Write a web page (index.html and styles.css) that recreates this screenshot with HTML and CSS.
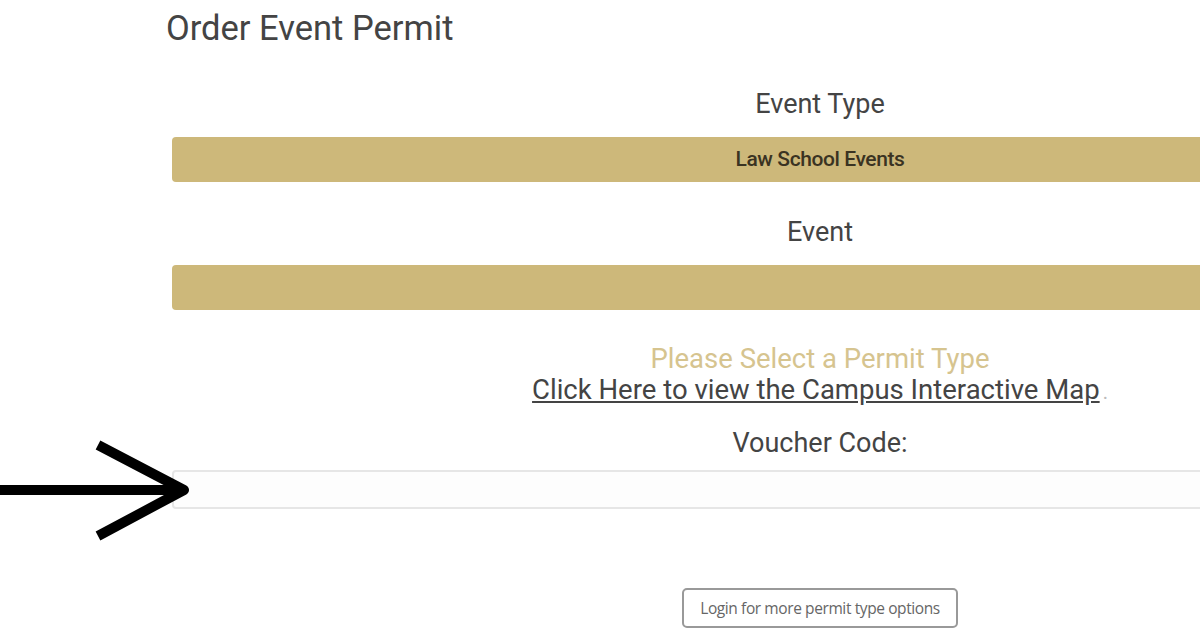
FILE: index.html
```html
<!DOCTYPE html>
<html>
<head>
    <title>Order Event Permit</title>
    <link rel="stylesheet" href="styles.css">
</head>
<body>
    <h2 class="page-title">Order Event Permit</h2>
    <div class="permit-form">
        <div class="field-label">Event Type</div>
        <div class="gold-select">Law School Events</div>

        <div class="field-label event-label">Event</div>
        <div class="gold-select"></div>

        <div class="permit-note">Please Select a Permit Type</div>
        <div class="map-line"><a href="#" class="map-link">Click Here to view the Campus Interactive Map</a><span class="dot">.</span></div>

        <div class="field-label voucher-label">Voucher Code:</div>
        <input type="text" class="voucher-input">

        <div class="login-row">
            <button class="login-button">Login for more permit type options</button>
        </div>
    </div>

    <svg class="pointer-arrow" width="200" height="110" viewBox="0 0 200 110">
        <path d="M0 50 H182 M98 5 L184 50 L98 96" fill="none" stroke="#000" stroke-width="10" stroke-linejoin="round"/>
    </svg>
</body>
</html>
```

FILE: styles.css
```css
body {
    font-family: Roboto, "Liberation Sans", sans-serif;
    background-color: #fff;
    color: #444;
    margin: 0;
    padding: 0;
    overflow: hidden;
    width: 1200px;
    height: 630px;
    position: relative;
}
.page-title {
    font-size: 34.5px;
    font-weight: 400;
    line-height: 40px;
    margin: 8px 0 0 166px;
    color: #444;
}
.permit-form {
    margin-left: 172px;
    width: 1296px;
    text-align: center;
}
.field-label {
    font-size: 27px;
    line-height: 30px;
    margin-top: 41px;
    color: #444;
}
.event-label {
    margin-top: 35px;
}
.gold-select {
    height: 45px;
    line-height: 45px;
    margin-top: 18px;
    background-color: #cdb87a;
    border-radius: 4px;
    font-size: 21px;
    font-weight: 500;
    color: #3a3322;
    letter-spacing: -0.4px;
}
.permit-note {
    font-size: 27.5px;
    line-height: 30px;
    margin-top: 34px;
    color: #d6c48f;
}
.map-line {
    font-size: 27.5px;
    line-height: 31px;
}
.map-link {
    color: #444;
    text-decoration: underline;
}
.dot {
    color: #bbb;
    margin-left: 3px;
    font-size: 20px;
}
.voucher-label {
    margin-top: 20px;
}
.voucher-input {
    display: block;
    box-sizing: border-box;
    width: 100%;
    height: 39px;
    margin-top: 12px;
    border: 2px solid #e6e6e6;
    border-radius: 4px;
    background-color: #fdfdfd;
}
.login-row {
    margin-top: 79px;
}
.login-button {
    width: 276px;
    height: 40px;
    background-color: #fff;
    border: 2px solid #999;
    border-radius: 5px;
    font-family: "Open Sans", sans-serif;
    font-size: 15.5px;
    color: #666;
    letter-spacing: -0.4px;
}
.pointer-arrow {
    position: absolute;
    left: 0;
    top: 440px;
}
```
